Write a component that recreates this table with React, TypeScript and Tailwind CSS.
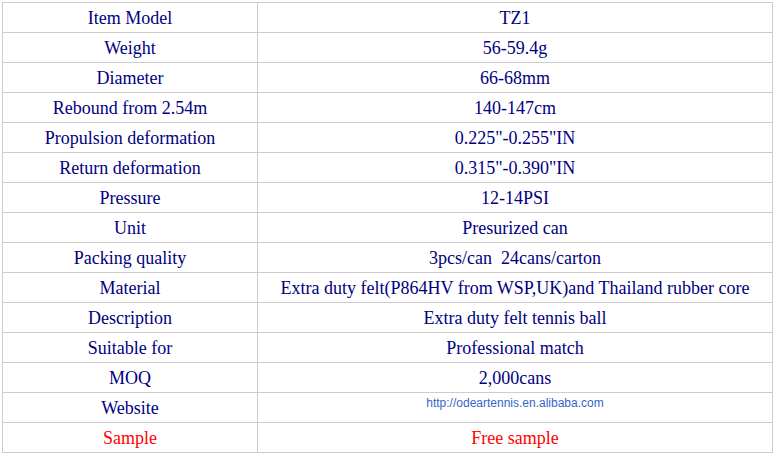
import React from "react";

const rows: [string, string][] = [
  ["Item Model", "TZ1"],
  ["Weight", "56-59.4g"],
  ["Diameter", "66-68mm"],
  ["Rebound from 2.54m", "140-147cm"],
  ["Propulsion deformation", "0.225\"-0.255\"IN"],
  ["Return deformation", "0.315\"-0.390\"IN"],
  ["Pressure", "12-14PSI"],
  ["Unit", "Presurized can"],
  ["Packing quality", "3pcs/can\u00a0\u00a024cans/carton"],
  ["Material", "Extra duty felt(P864HV from WSP,UK)and Thailand rubber core"],
  ["Description", "Extra duty felt tennis ball"],
  ["Suitable for", "Professional match"],
  ["MOQ", "2,000cans"],
];

const cell =
  "border border-[#cccccc] text-center p-0 h-[30px] leading-[28px] text-[18px] font-['Liberation_Serif','Times_New_Roman',serif]";

export default function App() {
  return (
    <div className="w-[774px] h-[455px] bg-white pt-[2px] pl-[2px]">
      <table className="border-collapse">
        <tbody>
          {rows.map(([a, b]) => (
            <tr key={a}>
              <td className={`${cell} w-[255px] text-[#000080]`}>{a}</td>
              <td className={`${cell} w-[515px] text-[#000080]`}>{b}</td>
            </tr>
          ))}
          <tr>
            <td className={`${cell} text-[#000080]`}>Website</td>
            <td className="border border-[#cccccc] text-center p-0 h-[30px] align-top">
              <div className="text-[12px] leading-[14px] text-[#3366cc] pt-[3px] font-['Liberation_Sans',Arial,sans-serif]">
                http://odeartennis.en.alibaba.com
              </div>
            </td>
          </tr>
          <tr>
            <td className={`${cell} text-[#ff0000]`}>Sample</td>
            <td className={`${cell} text-[#ff0000]`}>Free sample</td>
          </tr>
        </tbody>
      </table>
    </div>
  );
}
